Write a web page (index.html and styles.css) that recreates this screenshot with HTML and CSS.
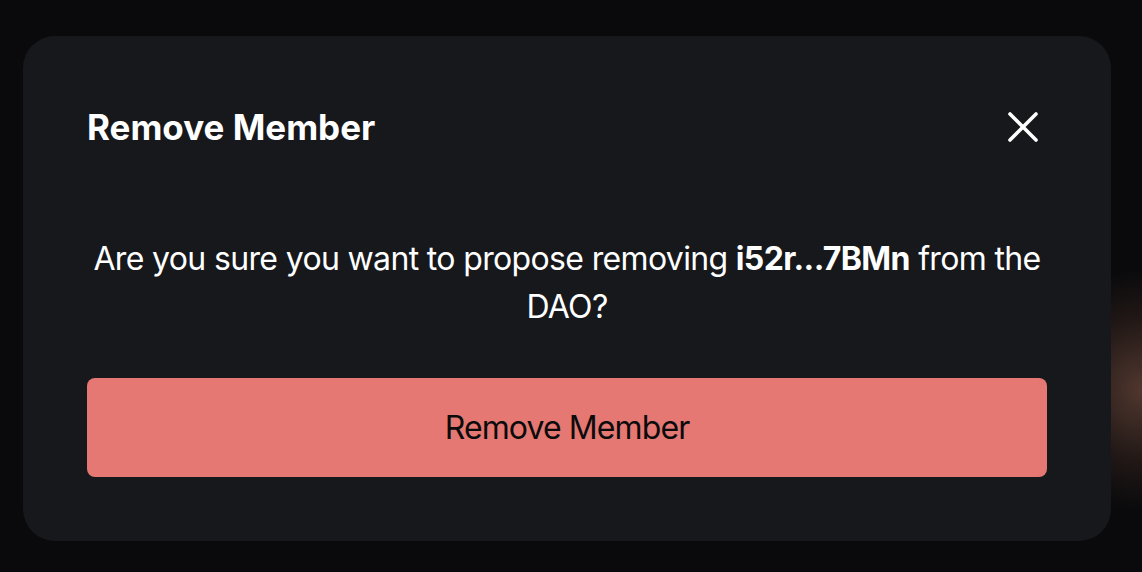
FILE: index.html
```html
<!DOCTYPE html>
<html lang="en">
<head>
    <meta charset="UTF-8">
    <meta name="viewport" content="width=device-width, initial-scale=1.0">
    <title>Remove Member</title>
    <link rel="stylesheet" href="styles.css">
</head>
<body>

    <div class="glow"></div>

    <!-- Confirm dialog -->
    <div class="modal">
        <div class="modal-header">
            <h2>Remove Member</h2>
            <button class="close" aria-label="Close">
                <svg width="32" height="32" viewBox="0 0 32 32" fill="none" stroke="#fff" stroke-width="3.6" stroke-linecap="round">
                    <line x1="3" y1="3" x2="29" y2="29"/>
                    <line x1="29" y1="3" x2="3" y2="29"/>
                </svg>
            </button>
        </div>
        <p class="modal-text">Are you sure you want to propose removing <strong>i52r...7BMn</strong> from the DAO?</p>
        <button class="danger">Remove Member</button>
    </div>

</body>
</html>
```

FILE: styles.css
```css
body {
    font-family: 'Inter', 'Noto Sans', sans-serif;
    margin: 0;
    padding: 36px 31px 31px 23px;
    background: #0a0a0c;
    color: #fff;
    height: 100vh;
    box-sizing: border-box;
    position: relative;
    overflow: hidden;
}
.glow {
    position: absolute;
    right: 0;
    top: 260px;
    width: 140px;
    height: 260px;
    background: radial-gradient(ellipse 110px 120px at 100% 50%, rgba(88, 60, 50, 0.9), rgba(60, 40, 34, 0.45) 60%, rgba(10, 10, 12, 0) 100%);
}
.modal {
    position: relative;
    background: #17181c;
    border-radius: 32px;
    padding: 64px;
    width: 1088px;
    box-sizing: border-box;
}
.modal-header {
    display: flex;
    justify-content: space-between;
    align-items: center;
    height: 54px;
}
.modal-header h2 {
    margin: 0;
    font-size: 35px;
    font-weight: 700;
    letter-spacing: 0;
}
.close {
    background: none;
    border: none;
    padding: 0;
    width: 48px;
    height: 48px;
    display: flex;
    align-items: center;
    justify-content: center;
    cursor: pointer;
}
.modal-text {
    margin: 81px 0 47px;
    font-size: 32px;
    line-height: 48px;
    letter-spacing: -0.65px;
    text-align: center;
}
.modal-text strong {
    font-weight: 700;
}
.danger {
    display: block;
    width: 100%;
    height: 99px;
    border: none;
    border-radius: 8px;
    background: #e57872;
    color: #0b0b0c;
    font-family: inherit;
    font-size: 32px;
    letter-spacing: -0.9px;
    cursor: pointer;
}
```
